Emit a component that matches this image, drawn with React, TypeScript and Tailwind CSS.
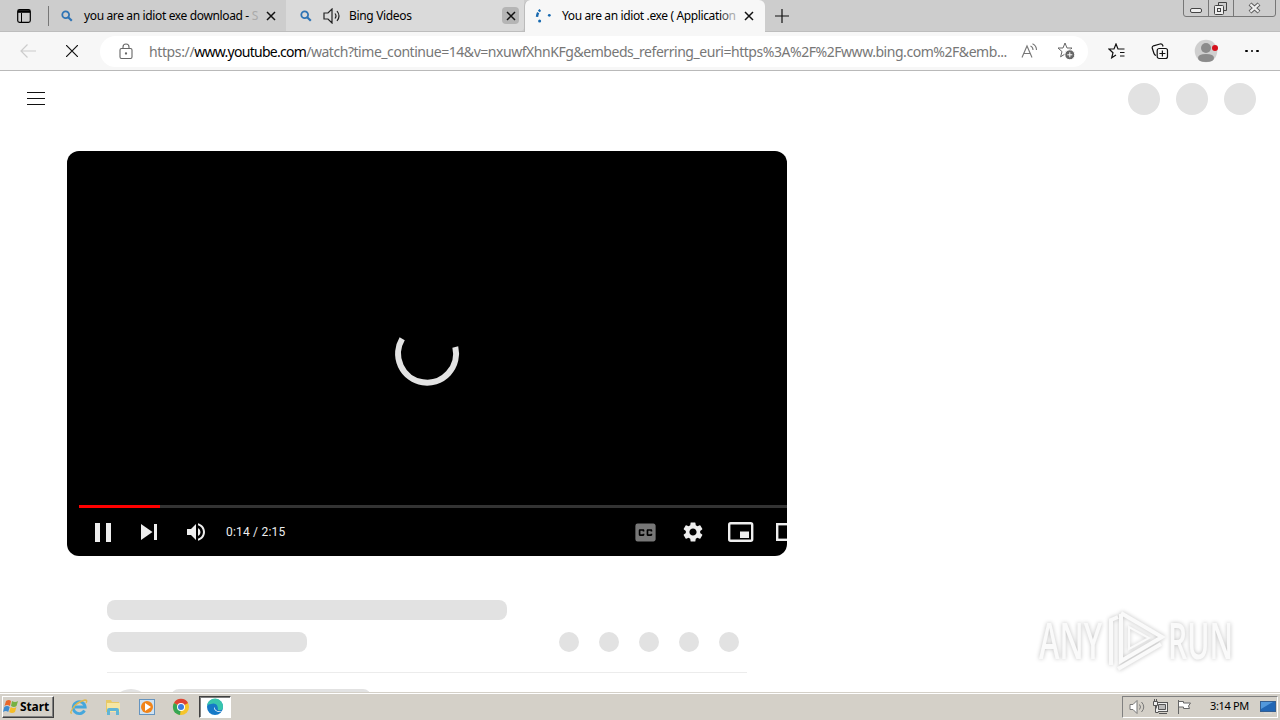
import type { ReactNode } from "react";
import { MdClosedCaption, MdSettings, MdVolumeUp } from "react-icons/md";

const url = {
  scheme: "https://",
  host: "www.youtube.com",
  path: "/watch?time_continue=14&v=nxuwfXhnKFg&embeds_referring_euri=https%3A%2F%2Fwww.bing.com%2F&emb...",
};

function Close({ className = "" }: { className?: string }) {
  return (
    <svg viewBox="0 0 10 10" className={`h-2.5 w-2.5 shrink-0 ${className}`} fill="none" stroke="#111" strokeWidth="1.5">
      <path d="M1 1l8 8M9 1l-8 8" />
    </svg>
  );
}

function SearchIcon() {
  return (
    <svg viewBox="0 0 12 12" className="h-3 w-3 shrink-0" fill="none" stroke="#2f74b5">
      <circle cx="4.7" cy="4.7" r="3.4" strokeWidth="1.8" />
      <path d="M7.2 7.2l3.6 3.6" strokeWidth="2.2" />
    </svg>
  );
}

function TabStrip() {
  return (
    <div className="flex h-8 border-b border-[#bdbdbd] bg-[#cdcdcd] text-[12px] text-black">
      <div className="flex w-12 items-center pl-[17px]">
        <svg viewBox="0 0 14 14" className="h-3.5 w-3.5" fill="none" stroke="#000">
          <rect x=".7" y=".7" width="12.6" height="12.6" rx="1.8" strokeWidth="1.2" />
          <path d="M1 2.5h12" strokeWidth="2.6" />
          <path d="M4.5 4v9" />
        </svg>
      </div>
      <div className="flex w-[238px] items-center">
        <div className="h-5 w-px bg-[#777]" />
        <div className="ml-3">
          <SearchIcon />
        </div>
        <div className="ml-[11px] w-[176px] whitespace-nowrap tracking-[-0.36px]">
          you are an idiot exe download - <span className="text-[#aaa]">S</span>
        </div>
        <Close className="ml-[6px]" />
      </div>
      <div className="flex w-[238px] items-center rounded-br bg-[#dadada]">
        <div className="ml-[14px]">
          <SearchIcon />
        </div>
        <svg viewBox="0 0 18 16" className="ml-[11px] h-4 w-[18px]" fill="none" stroke="#222" strokeWidth="1.2">
          <path d="M1 5h4l4-4v14l-4-4H1zM12 5.5q2 2.5 0 5M14 3q4 5 0 10" />
        </svg>
        <div className="ml-2 flex-1 tracking-[-0.33px]">Bing Videos</div>
        <div className="mr-[5px] flex h-[17px] w-[17px] items-center justify-center rounded-sm bg-[#b5b5b5]">
          <Close />
        </div>
      </div>
      <div className="-mb-px flex w-[241px] items-center rounded-t-md border-l border-[#bbb] bg-[#f7f7f7]">
        <svg viewBox="0 0 16 14" className="ml-[10px] h-3.5 w-4" fill="#1769b0">
          <circle cx="14.3" cy="6.3" r="1.4" />
          <circle cx="4.6" cy="12" r="1.5" />
          <path d="M5.4 1Q2.4 3.2 2 7.8" fill="none" stroke="#1769b0" strokeWidth="2.4" strokeDasharray="2.2 1.2 6" />
        </svg>
        <div className="ml-[11px] w-[175px] whitespace-nowrap tracking-[-0.37px]">
          You are an idiot .exe ( Applicati<span className="text-[#555]">o</span><span className="text-[#aaa]">n</span>
        </div>
        <Close className="ml-[7px]" />
      </div>
      <svg viewBox="0 0 14 14" className="ml-[10px] mt-[9px] h-3.5 w-3.5" stroke="#111" strokeWidth="1.2">
        <path d="M7 0v14M0 7h14" />
      </svg>
      <svg viewBox="0 0 94 17" className="ml-auto mr-[3px] h-[17px] w-[94px]" fill="none" stroke="#777">
        <path d="M.5 0v14q0 2.5 2.5 2.5h87q2.5 0 2.5-2.5V0M25.5 0v16M50.5 0v16" />
        <rect x="7.5" y="8.5" width="11" height="4" rx="1.5" stroke="#444" fill="#eee" />
        <path d="M35.5 5V2.5h8v8H41" stroke="#444" />
        <rect x="31.5" y="5.5" width="9" height="9" rx="1" stroke="#444" fill="#eee" />
        <rect x="34.5" y="8.5" width="3" height="3" stroke="#444" />
        <path d="M67 4l9 8M76 4l-9 8" stroke="#555" strokeWidth="4.2" />
        <path d="M67.4 4.4l8.2 7.2M75.6 4.4l-8.2 7.2" stroke="#eee" strokeWidth="2.2" />
      </svg>
    </div>
  );
}

const star = "M8 1l2 5h5l-4 3.6 1.2 5L8 12l-4.4 2.8 1.4-5.2L1 6h5z";

function Toolbar() {
  return (
    <div className="flex h-[39px] items-center border-b border-[#b9b9b9] bg-[#f7f7f7]">
      <svg viewBox="0 0 16 14" className="ml-5 h-3.5 w-4" fill="none" stroke="#ccc" strokeWidth="1.2">
        <path d="M16 7H1M7.5.5L1 7l6.5 6.5" />
      </svg>
      <svg viewBox="0 0 12 12" className="ml-[30px] h-3 w-3" fill="none" stroke="#111" strokeWidth="1.2">
        <path d="M0 0l12 12M12 0L0 12" />
      </svg>
      <div className="ml-[22px] flex h-[31px] w-[988px] items-center rounded-full bg-white">
        <svg viewBox="0 0 14 17" className="ml-[19px] h-[17px] w-3.5" fill="none" stroke="#666" strokeWidth="1.1">
          <rect x="1" y="5.5" width="12" height="10" rx="1.5" />
          <path d="M4 5.5V4q0-3 3-3t3 3v1.5" />
          <circle cx="7" cy="10.5" r=".6" fill="#666" />
        </svg>
        <div className="ml-4 w-[862px] whitespace-nowrap text-[14px] text-[#777]">
          <span className="tracking-[-0.38px]">{url.scheme}</span>
          <span className="tracking-[-0.72px] text-black">{url.host}</span>
          <span className="tracking-[-0.455px]">{url.path}</span>
        </div>
        <svg viewBox="0 0 17 16" className="ml-[10px] h-4 w-[17px]" fill="none" stroke="#777" strokeWidth="1.1">
          <path d="M1 14.5L6 3l5 11.5M2.8 10.5h6.4M9.5 3q2.5 1 2.500 4M11.5 .8q4 2 4 6.2" />
        </svg>
        <svg viewBox="0 0 18 18" className="ml-[19px] h-[18px] w-[18px]" fill="none" stroke="#666">
          <path d={star} />
          <circle cx="12.8" cy="12.8" r="5" fill="#666" stroke="#fff" />
          <path d="M10.3 12.8h5M12.8 10.3v5" stroke="#fff" />
        </svg>
      </div>
      <svg viewBox="0 0 18 16" className="ml-5 h-4 w-[18px]" fill="none" stroke="#111" strokeWidth="1.2">
        <path d="M11 6h5.5M12 9.5h4.5M12 13h4.5M11.5 6H10L8 1 6 6H1l4 3.7-1.3 5.1L8 12" />
      </svg>
      <svg viewBox="0 0 18 17" className="ml-[25px] h-[17px] w-[18px]" fill="none" stroke="#111" strokeWidth="1.2">
        <rect x="6.2" y="5.5" width="10.3" height="10" rx="2" />
        <path d="M11.4 7.5v6M8.4 10.5h6M5 12.5Q3.5 12 3 10.5L1.2 5Q1 3.3 2.5 2.8L9 1q2-.4 2.7 1.2L12 3.5" />
      </svg>
      <svg viewBox="0 0 24 24" className="ml-[25px] h-6 w-6">
        <circle cx="12" cy="12" r="11.3" fill="#cfcfcf" />
        <circle cx="12" cy="9" r="5" fill="#8b8b8b" />
        <path d="M4 19q0-4 8-4t8 4-8 4T4 19" fill="#8b8b8b" />
        <circle cx="21" cy="9" r="3" fill="#d5101c" />
      </svg>
      <div className="ml-[27px] flex gap-[3px]">
        {[0, 1, 2].map((i) => (
          <i key={i} className="h-[2.5px] w-[2.5px] rounded-full bg-black" />
        ))}
      </div>
    </div>
  );
}

function Player() {
  return (
    <div className="ml-[67px] mt-6 flex h-[405px] w-[720px] flex-col overflow-hidden rounded-xl bg-black">
      <svg viewBox="0 0 720 354" className="h-[354px] w-[720px] shrink-0" fill="none">
        <path d="M335.2 187.7A29 29 0 1 0 388.3 196" stroke="#e3e3e3" strokeWidth="6" />
      </svg>
      <div className="ml-3 flex h-[3px] shrink-0 bg-[#333]">
        <div className="w-[81px] bg-[#f00]" />
      </div>
      <div className="flex h-12 shrink-0 items-center text-[#eee]">
        <svg viewBox="0 0 16 19" className="ml-7 h-[19px] w-4 shrink-0" fill="currentColor">
          <path d="M0 0h5v19H0zM11 0h5v19h-5z" />
        </svg>
        <svg viewBox="0 0 16 16" className="ml-[30px] h-4 w-4 shrink-0" fill="currentColor">
          <path d="M0 0l11.5 8L0 16zM13 0h3v16h-3z" />
        </svg>
        <MdVolumeUp className="ml-[27px] h-6 w-6 shrink-0" />
        <div className="ml-[18px] w-[400px] shrink-0 text-[12px] font-[Roboto,sans-serif] tracking-[0.2px]">
          0:14 / 2:15
        </div>
        <svg viewBox="0 0 0 0" className="h-0 w-0" />
        <MdClosedCaption className="ml-[6px] h-[27px] w-[27px] shrink-0 text-[#777]" />
        <MdSettings className="ml-[22px] h-6 w-6 shrink-0" />
        <svg viewBox="0 0 26 20" className="ml-[23px] h-5 w-[26px] shrink-0" fill="none" stroke="currentColor" strokeWidth="2.4">
          <rect x="1.2" y="1.2" width="23" height="17.6" rx="1.5" />
          <rect x="12" y="9.5" width="9" height="6.5" fill="currentColor" stroke="none" />
        </svg>
        <svg viewBox="0 0 26 18" className="ml-[22px] h-[18px] w-[26px] shrink-0" fill="none" stroke="currentColor" strokeWidth="2.4">
          <rect x="1.2" y="1.2" width="23" height="15.6" />
        </svg>
      </div>
    </div>
  );
}

function Watermark() {
  return (
    <svg
      viewBox="0 0 210 76"
      className="absolute left-[1030px] top-[532px] h-[76px] w-[210px] overflow-visible [filter:drop-shadow(0_0_2px_#c0c0c0)]"
      fill="#fafafa"
    >
      <g fontFamily="'Open Sans', sans-serif" fontSize="50" fontWeight="600">
        <text x="9" y="56" textLength="63" lengthAdjust="spacingAndGlyphs">ANY</text>
        <text x="138" y="56" textLength="65" lengthAdjust="spacingAndGlyphs">RUN</text>
      </g>
      <g fill="none" stroke="#fafafa" strokeWidth="4">
        <path d="M91 11v47l41-24-41-24" />
        <path d="M88 14l-7 3v45M88 66l43-25" />
        <path d="M99 24v22l20-11z" strokeWidth="2" />
      </g>
    </svg>
  );
}

function Page() {
  return (
    <main className="relative h-[621px] overflow-hidden bg-white">
      <div className="flex h-14 items-center justify-between pl-[27px] pr-6">
        <svg viewBox="0 0 18 14" className="-mt-0.5 h-3.5 w-[18px]" stroke="#111">
          <path d="M0 1.5h18M0 7.5h18M0 13.5h18" />
        </svg>
        <div className="flex gap-4">
          {[0, 1, 2].map((i) => (
            <div key={i} className="h-8 w-8 rounded-full bg-[#e2e2e2]" />
          ))}
        </div>
      </div>
      <Player />
      <div className="ml-[107px] mt-11 w-[640px]">
        <div className="h-5 w-[400px] rounded-lg bg-[#e2e2e2]" />
        <div className="mt-3 flex items-center justify-between pr-2">
          <div className="h-5 w-[200px] rounded-lg bg-[#e2e2e2]" />
          <div className="flex gap-5">
            {[0, 1, 2, 3, 4].map((i) => (
              <div key={i} className="h-5 w-5 rounded-full bg-[#e2e2e2]" />
            ))}
          </div>
        </div>
        <div className="mt-5 flex border-t border-[#ececec] pt-4">
          <div className="ml-1 h-10 w-10 rounded-full bg-[#e2e2e2]" />
          <div className="ml-5 h-5 w-[200px] rounded-lg bg-[#e2e2e2]" />
        </div>
      </div>
      <Watermark />
    </main>
  );
}

function TaskIcon({ children }: { children: ReactNode }) {
  return (
    <svg viewBox="0 0 18 18" className="h-[18px] w-[18px] shrink-0">
      {children}
    </svg>
  );
}

function Taskbar() {
  return (
    <footer className="flex h-7 items-center border-t border-[#d4d0c8] bg-[#d4d0c8] shadow-[inset_0_1px_#fff]">
      <div className="ml-0.5 flex h-[22px] w-[52px] items-center border border-b-[#404040] border-l-white border-r-[#404040] border-t-white shadow-[inset_-1px_-1px_#808080]">
        <svg viewBox="0 0 16 15" className="h-[15px] w-4 shrink-0">
          <path d="M3 2q3-2 5 0L7 7Q4 5 1.5 7z" fill="#e9682b" />
          <path d="M9 2q3 2 6 0l-1.5 5Q11 9 8 7z" fill="#76b143" />
          <path d="M1.3 8Q4 6 6.7 8l-1.5 5Q3 11 0 13z" fill="#3d8bd0" />
          <path d="M7.7 8q3 2 5.7 0L12 13q-3 2-5.8 0z" fill="#f5bd28" />
        </svg>
        <span className="ml-px text-[12px] font-bold tracking-[-0.1px] text-black">Start</span>
      </div>
      <div className="ml-4 flex items-center gap-4">
        <TaskIcon>
          <path d="M14.5 12.5A6 6 0 1 1 15.2 9H5" fill="none" stroke="#45a7dc" strokeWidth="2.8" />
          <path d="M2 15Q-1 16 3 10T15 2q3 0 1 3" fill="none" stroke="#dfb84e" strokeWidth="1.3" />
        </TaskIcon>
        <TaskIcon>
          <path d="M2 2h5l1 2h7v10H2z" fill="#e7c966" />
          <path d="M3 5h13v9H3z" fill="#f6e6a2" />
          <path d="M3 17v-5q0-2 2-2h8q2 0 2 2v5h-3v-4H6v4z" fill="#61b5d5" />
        </TaskIcon>
        <TaskIcon>
          <rect x="1.5" y="1.5" width="15" height="15" fill="#cfe2f2" stroke="#6594bf" />
          <circle cx="9" cy="9" r="6" fill="#f18419" />
          <path d="M7 5l6 4-6 4z" fill="#fff" />
        </TaskIcon>
        <TaskIcon>
          <circle cx="9" cy="9" r="8" fill="#f6c52b" />
          <path d="M9 9L2 5a8 8 0 0 1 14 0z" fill="#df4334" />
          <path d="M9 9l-1 8A8 8 0 0 1 2 5z" fill="#36a653" />
          <circle cx="9" cy="9" r="4" fill="#fff" />
          <circle cx="9" cy="9" r="3" fill="#3c7de0" />
        </TaskIcon>
        <div className="-ml-[7px] flex h-[22px] w-8 items-center justify-center border border-b-white border-l-[#404040] border-r-white border-t-[#404040] bg-white shadow-[inset_1px_1px_#808080]">
          <TaskIcon>
            <circle cx="9" cy="9" r="8" fill="#1679c7" />
            <path d="M1 8A8 8 0 0 1 17 9q0 4-5 3 0-8-7-6-3 0-4 2" fill="#38c5ad" />
            <path d="M9 9q-1 5 7 4-3 2-6 0T9 9" fill="#fff" />
          </TaskIcon>
        </div>
      </div>
      <div className="ml-auto mr-[2px] flex h-[22px] w-[156px] items-center border border-b-white border-l-[#808080] border-r-white border-t-[#808080]">
        <svg viewBox="0 0 16 16" className="ml-[6px] h-4 w-4" fill="#fff" stroke="#777">
          <path d="M1 5.5h3l4-4v13l-4-4H1z" />
          <path d="M10.5 5.5q2 2.5 0 5M12.5 3q4.5 5 0 10" fill="none" />
        </svg>
        <svg viewBox="0 0 17 16" className="ml-[7px] h-4 w-[17px]" fill="#eee" stroke="#555">
          <rect x="4.5" y="3.5" width="11" height="9" />
          <path d="M6.5 5.5h7v5h-7z" fill="#bbb" />
          <path d="M7 14.5h8M1.5 2.5h4v4h-4zM2.5 0v2M4.5 0v2M3.5 7v6.5h3" />
        </svg>
        <svg viewBox="0 0 16 16" className="ml-[7px] h-4 w-4" fill="#fff" stroke="#666">
          <path d="M2.5 1v14M2.5 2.5h5V4h7l-2 3 1 2.5h-6V8h-5z" />
        </svg>
        <span className="ml-[18px] whitespace-nowrap text-[11px] tracking-[-0.35px] text-black">3:14 PM</span>
        <svg viewBox="0 0 16 14" className="ml-auto mr-px h-3.5 w-4">
          <rect x=".5" y="1.5" width="15" height="10" fill="#2166b5" stroke="#345e91" />
          <path d="M1 2h12L1 9z" fill="#5298dc" />
          <path d="M4 13h8" stroke="#ddd" />
        </svg>
      </div>
    </footer>
  );
}

export default function App() {
  return (
    <div className="h-[720px] w-[1280px] overflow-hidden bg-white font-['Noto_Sans','Open_Sans',sans-serif]">
      <TabStrip />
      <Toolbar />
      <Page />
      <Taskbar />
    </div>
  );
}
